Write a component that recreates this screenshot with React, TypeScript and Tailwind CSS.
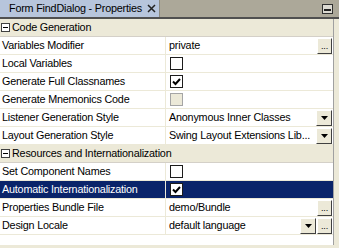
const font = { fontFamily: '"Liberation Sans", Arial, sans-serif' };

const Dots = () => (
  <div className="w-[15px] h-[16px] bg-[#ece9d8] border border-t-white border-l-white border-r-[#404040] border-b-[#404040] flex items-end justify-center pb-[2px] text-[9px] leading-none text-black">
    ...
  </div>
);

const Arrow = () => (
  <div className="w-[16px] h-[16px] bg-[#ece9d8] border border-t-white border-l-white border-r-[#404040] border-b-[#404040] flex items-center justify-center">
    <svg width="7" height="4" viewBox="0 0 7 4">
      <path d="M0 0h7L3.5 4z" fill="#000" />
    </svg>
  </div>
);

const Check = ({ on, disabled }: { on?: boolean; disabled?: boolean }) => (
  <div
    className={`w-[13px] h-[13px] border flex items-center justify-center ${
      disabled ? "bg-[#ece9d8] border-[#a5a5a5]" : "bg-white border-[#1c1c1c]"
    }`}
  >
    {on && (
      <svg width="9" height="8" viewBox="0 0 9 8">
        <path d="M1 3.5l2.5 2.5L8 1" stroke="#000" strokeWidth="2" fill="none" />
      </svg>
    )}
  </div>
);

type Row = {
  label: string;
  value?: string;
  check?: "on" | "off" | "disabled";
  dots?: boolean;
  arrow?: boolean;
  selected?: boolean;
};

const Header = ({ title }: { title: string }) => (
  <div className="h-[18px] bg-[#ece9d8] flex items-center pl-[1px] gap-[2px] border-b border-[#d4d0c8]">
    <div className="w-[9px] h-[9px] border border-[#404040] bg-white flex items-center justify-center">
      <div className="w-[5px] h-[1px] bg-black" />
    </div>
    <span className="text-[10.8px] tracking-[-0.2px] text-black whitespace-nowrap">{title}</span>
  </div>
);

const PropRow = ({ r }: { r: Row }) => (
  <div className={`h-[18px] flex border-b border-[#ece9d8] ${r.selected ? "bg-[#0a246a] text-white" : "bg-white text-black"}`}>
    <div className="w-[166px] pl-[2px] flex items-center text-[10.8px] tracking-[-0.2px] whitespace-nowrap overflow-hidden border-r border-[#ece9d8]">
      {r.label}
    </div>
    <div className="flex-1 min-w-0 flex items-center pl-[3px] pr-[1px] text-[10.8px] tracking-[-0.2px] whitespace-nowrap">
      {r.check ? (
        <div className="ml-[1px]">
          <Check on={r.check === "on"} disabled={r.check === "disabled"} />
        </div>
      ) : (
        <span className="flex-1 min-w-0">{r.value}</span>
      )}
      <div className="ml-auto pl-[2px] flex gap-[1px] shrink-0">
        {r.arrow && <Arrow />}
        {r.dots && <Dots />}
      </div>
    </div>
  </div>
);

const code: Row[] = [
  { label: "Variables Modifier", value: "private", dots: true },
  { label: "Local Variables", check: "off" },
  { label: "Generate Full Classnames", check: "on" },
  { label: "Generate Mnemonics Code", check: "disabled" },
  { label: "Listener Generation Style", value: "Anonymous Inner Classes", arrow: true },
  { label: "Layout Generation Style", value: "Swing Layout Extensions Lib...", arrow: true },
];

const res: Row[] = [
  { label: "Set Component Names", check: "off" },
  { label: "Automatic Internationalization", check: "on", selected: true },
  { label: "Properties Bundle File", value: "demo/Bundle", dots: true },
  { label: "Design Locale", value: "default language", arrow: true, dots: true },
];

export default function App() {
  return (
    <div style={font} className="w-[339px] h-[248px] bg-[#ece9d8] flex flex-col overflow-hidden">
      <div className="h-[19px] bg-[#aca899] flex border-b-2 border-[#505050]">
        <div className="w-[160px] bg-[#b7c5dc] flex items-center pl-[9px] gap-[5px] text-[10.8px] tracking-[-0.2px] text-black border-r border-[#8c8a80]">
          <span className="whitespace-nowrap">Form FindDialog - Properties</span>
          <svg width="9" height="9" viewBox="0 0 9 9" className="shrink-0">
            <path d="M1 1l7 7M8 1L1 8" stroke="#222" strokeWidth="1.5" />
          </svg>
        </div>
        <div className="flex-1 flex items-center justify-end pr-[6px]">
          <div className="w-[11px] h-[10px] border border-[#303030] bg-[#dcdad2] flex items-end justify-center pb-[2px]">
            <div className="w-[7px] h-[2px] bg-[#202020]" />
          </div>
        </div>
      </div>
      <div className="flex flex-1">
        <div className="w-[334px] bg-white flex flex-col border-r border-[#a0a0a0]">
          <Header title="Code Generation" />
          {code.map((r) => (
            <PropRow key={r.label} r={r} />
          ))}
          <Header title="Resources and Internationalization" />
          {res.map((r) => (
            <PropRow key={r.label} r={r} />
          ))}
          <div className="flex-1 bg-white" />
        </div>
      </div>
      <div className="h-[3px] bg-[#ece9d8]" />
    </div>
  );
}
